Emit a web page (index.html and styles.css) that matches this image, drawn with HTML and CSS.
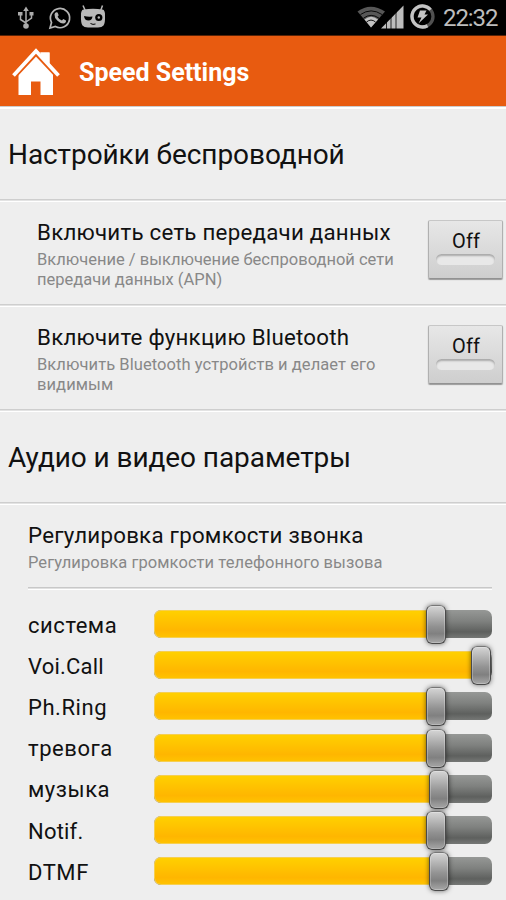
FILE: index.html
```html
<!DOCTYPE html>
<html lang="ru">
<head>
<meta charset="utf-8">
<title>Speed Settings</title>
<link rel="stylesheet" href="styles.css">
</head>
<body>
<div class="status">
  <svg class="usb" width="16" height="24" viewBox="0 0 16 24" fill="none" stroke="#aaa" stroke-width="1.5"><path d="M8 4V20M8 17L2.500 13.500V8.500M8 16L13.500 12V8.500"/><path d="M8 .5L10.800 5H5.200zM0 6H4.500V9.500H0zM11.500 6H15.500V9.500H11.500z" fill="#aaa" stroke="none"/><circle cx="8" cy="20" r="2.800" fill="#aaa" stroke="none"/></svg>
  <svg class="whatsapp" width="24" height="24" viewBox="0 0 24 24"><path d="M2 22L3.500 16.500A9.600 9.600 0 1 1 7.400 20.500Z" fill="none" stroke="#b5b5b5" stroke-width="1.700"/><path d="M8.200 6.200L9.600 6.400L10.700 9.200L9.600 10.700Q11 13.500 13.900 14.600L15.300 13.100L18 14.500Q18.300 17 15.300 17.500Q12.500 17.600 9.500 14.800Q6.200 11.700 6.500 8.400Q6.800 6.600 8.200 6.200Z" fill="#b5b5b5"/></svg>
  <svg class="cid" width="26" height="24" viewBox="0 0 26 24"><path d="M3 .5L5.500 6M22.500 .5L20.500 6" stroke="#b5b5b5" stroke-width="1.500"/><path d="M3.500 4.500Q13 3 22.500 4.500Q25.300 5 25 11Q25.300 18 23.500 20.500Q22 22.300 18 22.500H8Q4 22.300 2.500 20.500Q.7 18 1 11Q.7 5 3.500 4.500Z" fill="#b9b9b9"/><path d="M4 11Q8 12 12.500 11.500Q12 15.500 8.500 15.500Q4.500 15.500 4 11Z"/><circle cx="18.800" cy="12.500" r="3.600"/><circle cx="18.800" cy="12.500" r="1.200" fill="#b9b9b9"/><path d="M10.500 18.500Q13 20 15.500 19" stroke="#000" fill="none"/></svg>
  <span class="grow"></span>
  <svg class="signal" width="47" height="24" viewBox="0 0 47 24"><path d="M.5 6.500Q13.500-3 28 6.500L14 22.500Z" fill="#575757"/><path d="M7.500 14.500Q14 9 21 14.500L14 22.500Z" fill="#c2c2c2"/><path d="M3.500 9.500Q14 2.300 25 9.500M6.500 13.200Q14 7.500 22 13.200M9.500 17Q14 13.200 18.500 17" fill="none" stroke="#000" stroke-width=".9"/><path d="M24 23.500L46.500 .5V23.500Z" fill="#bdbdbd"/><path d="M29.500 15V24M34 10V24M39 5V24" stroke="#000" stroke-width=".8"/></svg>
  <svg class="battery" width="25" height="25" viewBox="0 0 25 25"><circle cx="12.500" cy="12.500" r="10.500" fill="none" stroke="#505050" stroke-width="3.300"/><path d="M20.500 5.700A10.500 10.500 0 1 0 17.500 21.700" fill="none" stroke="#c4c4c4" stroke-width="3.300"/><path d="M10 6.500H16.500L14.500 10.500H18L8.500 19.500L11.500 13.500H7.500Z" fill="#c4c4c4"/></svg>
  <span class="clock">22:32</span>
</div>
<header class="bar">
  <svg class="home" width="48" height="48" viewBox="0 0 48 48" fill="#fff"><path d="M24 7L41 25V47H28.500V33.500H19V47H6.500V25Z"/><path d="M28 4.500H37.500V20L28 11Z"/><path d="M1.500 28.500L24 4.500L46.500 28.500" fill="none" stroke="#e85b10" stroke-width="5.500"/><path d="M1.500 27.500L24 3L46.500 27.500" fill="none" stroke="#fff" stroke-width="3.700"/><path d="M29 4.500H37.500V17L29 8Z"/></svg>
  <h1 class="app">Speed Settings</h1>
</header>
<h2 class="section first">Настройки беспроводной</h2>
<div class="item">
  <div class="copy"><div class="title">Включить сеть передачи данных</div><div class="sub">Включение / выключение беспроводной сети<br>передачи данных (APN)</div></div>
  <button class="toggle"><span>Off</span><i></i></button>
</div>
<div class="item">
  <div class="copy"><div class="title">Включите функцию Bluetooth</div><div class="sub wide">Включить Bluetooth устройств и делает его<br>видимым</div></div>
  <button class="toggle"><span>Off</span><i></i></button>
</div>
<h2 class="section">Аудио и видео параметры</h2>
<section class="volume">
  <div class="title">Регулировка громкости звонка</div>
  <div class="sub wide">Регулировка громкости телефонного вызова</div>
  <div class="rule"></div>
  <div class="rows">
    <div class="row"><span>система</span><div class="track"><div class="fill" style="width:282px"><b></b></div></div></div>
    <div class="row"><span class="tight">Voi.Call</span><div class="track"><div class="fill" style="width:327px"><b></b></div></div></div>
    <div class="row"><span>Ph.Ring</span><div class="track"><div class="fill" style="width:282px"><b></b></div></div></div>
    <div class="row"><span>тревога</span><div class="track"><div class="fill" style="width:282px"><b></b></div></div></div>
    <div class="row"><span>музыка</span><div class="track"><div class="fill" style="width:285px"><b></b></div></div></div>
    <div class="row"><span class="tight">Notif.</span><div class="track"><div class="fill" style="width:282px"><b></b></div></div></div>
    <div class="row"><span>DTMF</span><div class="track"><div class="fill" style="width:285px"><b></b></div></div></div>
  </div>
</section>
</body>
</html>
```
FILE: styles.css
```css
* { box-sizing: border-box; }
body { margin: 0; height: 900px; overflow: hidden; background: #eee; color: #111; font-family: Roboto, sans-serif; }
.status { display: flex; height: 36px; padding: 5px 8px 0 18px; background: #000; border-bottom: 1px solid #5a2306; }
.grow { flex: 1; }
.usb { margin-top: 1px; }
.whatsapp { margin-left: 14px; margin-top: 1px; }
.cid { margin-left: 8px; }
.signal { margin-right: 6px; }
.battery { margin-top: -1px; }
.clock { margin-left: 8px; width: 55px; font-size: 24px; line-height: 27px; color: #bdbdbd; white-space: nowrap; letter-spacing: -1.1px; }
.bar { display: flex; height: 70px; background: #e85b10; padding: 12px 0 0 12px; }
.app { margin: 0 0 0 19px; font-size: 25px; line-height: 49px; color: #fff; font-weight: 700; white-space: nowrap; }
.section { margin: 0; height: 93px; border-bottom: 1px solid #cecece; box-shadow: 0 1px #e3e3e3, 0 2px #fff; padding: 1px 8px 0; font-size: 28px; font-weight: 400; line-height: 93px; white-space: nowrap; letter-spacing: -.08px; }
.first { height: 94px; border-top: 1px solid #ccc; box-shadow: inset 0 2px #fff, 0 1px #e3e3e3, 0 2px #fff; }
.item { display: flex; justify-content: space-between; height: 105px; padding: 19px 3px 0 37px; border-bottom: 1px solid #cecece; box-shadow: 0 1px #e3e3e3, 0 2px #fff; }
.title { font-size: 22.300px; line-height: 26px; white-space: nowrap; letter-spacing: .24px; }
.sub { margin-top: 5px; font-size: 16.500px; line-height: 20px; color: #888; white-space: nowrap; }
.wide { letter-spacing: .07px; }
.toggle { display: flex; flex-direction: column; justify-content: flex-start; width: 75px; height: 59px; margin-top: 1px; padding: 8px 7px 0; border: 1px solid #b8b8b8; border-color: #c7c7c7 #b0b0b0 #929292; border-radius: 2px; background: linear-gradient(#e7e7e7, #cecece); box-shadow: 0 1px 1px #999; font: 20px/24px Roboto, sans-serif; color: #111; text-align: center; }
.toggle span { letter-spacing: .1px; padding-left: 1px; }
.toggle i { height: 11px; margin-top: 1px; background: #e8e8e8; border-radius: 6px; box-shadow: inset 0 2px 2px #aaa; }
.volume { padding: 19px 14px 0 28px; }
.volume .sub { margin-top: 6px; line-height: 18px; }
.rule { height: 3px; margin-top: 15px; border-top: 1px solid #c8c8c8; border-bottom: 1px solid #fff; background: #e0e0e0; }
.rows { display: grid; grid-auto-rows: 41.200px; padding-top: 13.500px; }
.row { display: flex; align-items: center; font-size: 22px; }
.row span { width: 126px; line-height: 28px; padding-top: 3px; white-space: nowrap; letter-spacing: .55px; }
.row .tight { letter-spacing: .2px; }
.track { flex: 1; height: 28px; border-radius: 7px; background: linear-gradient(#969896, #7f817f 40%, #5e605e 78%, #757775); }
.fill { position: relative; height: 28px; border-radius: 7px 0 0 7px; border: 1px solid #f6cf50; border-right: 0; background: linear-gradient(#ffd000, #ffb600 75%, #ffc200); }
.fill b { position: absolute; right: -10px; top: -6px; width: 20px; height: 39px; border: 1.500px solid #4a4a4a; border-top-color: #777; border-radius: 6px; background: linear-gradient(#d5d5d5, #929292 55%, #808080 75%, #a8a8a8); box-shadow: 0 0 5px rgba(0,0,0,.55), inset 0 0 0 1px rgba(255,255,255,.25); }
```
